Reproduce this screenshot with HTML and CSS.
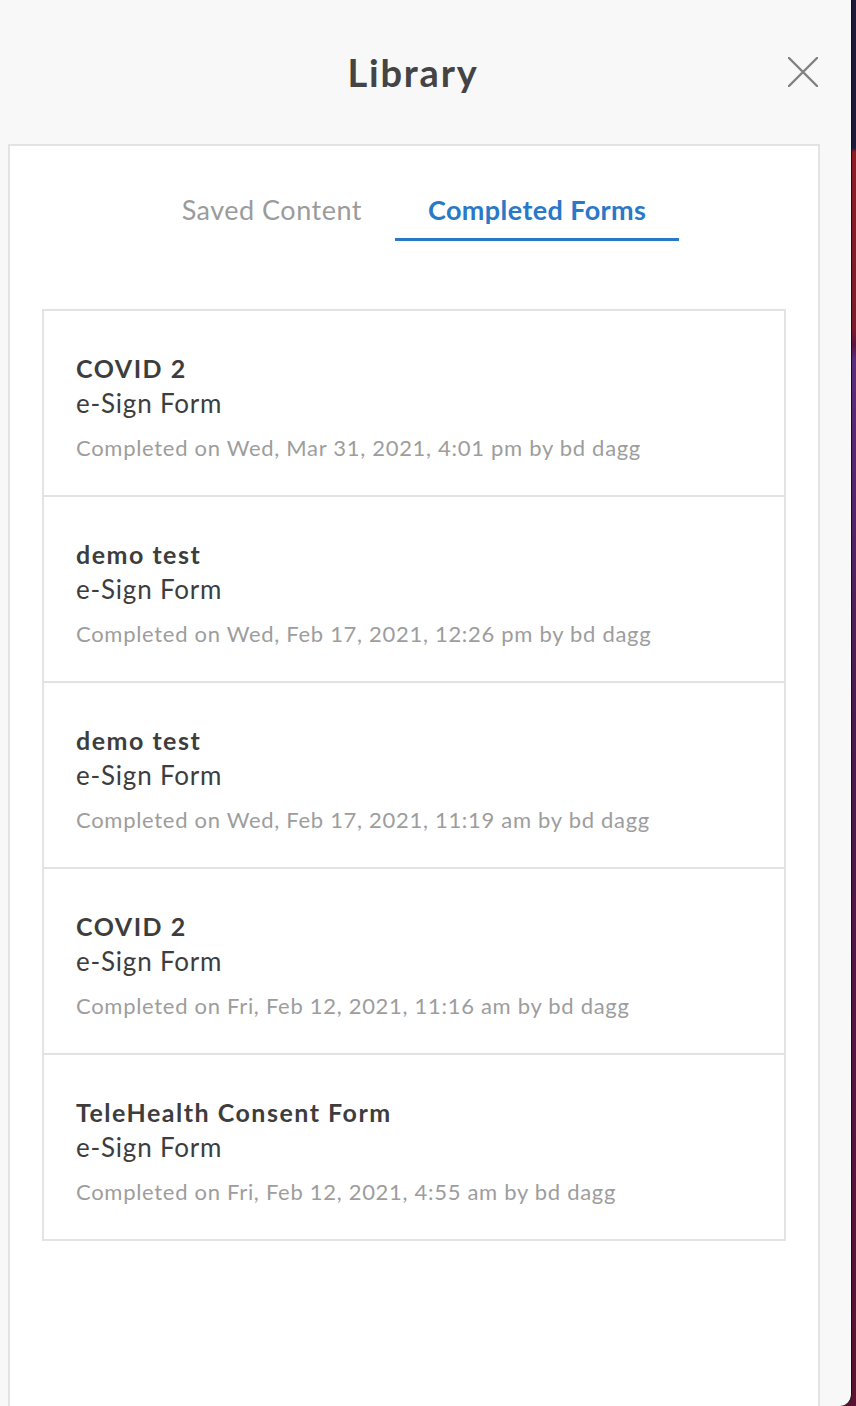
FILE: index.html
```html
<!DOCTYPE html>
<html lang="en">
<head>
    <meta charset="UTF-8">
    <meta name="viewport" content="width=device-width, initial-scale=1.0">
    <title>Library</title>
    <link rel="stylesheet" href="styles.css">
</head>
<body>

<div class="panel">
    <div class="header">
        <span></span>
        <h2>Library</h2>
        <button class="close" aria-label="Close">
            <svg width="30" height="30" viewBox="0 0 30 30">
                <path d="M1 1 L29 29 M29 1 L1 29" stroke="#808080" stroke-width="2.4" stroke-linecap="round" fill="none"/>
            </svg>
        </button>
    </div>

    <div class="content">
        <div class="tabs">
            <div class="tab">Saved Content</div>
            <div class="tab active">Completed Forms</div>
        </div>

        <div class="list">
            <div class="item">
                <div class="item-title">COVID 2</div>
                <div class="item-type">e-Sign Form</div>
                <div class="item-date">Completed on Wed, Mar 31, 2021, 4:01 pm by bd dagg</div>
            </div>
            <div class="item">
                <div class="item-title">demo test</div>
                <div class="item-type">e-Sign Form</div>
                <div class="item-date">Completed on Wed, Feb 17, 2021, 12:26 pm by bd dagg</div>
            </div>
            <div class="item">
                <div class="item-title">demo test</div>
                <div class="item-type">e-Sign Form</div>
                <div class="item-date">Completed on Wed, Feb 17, 2021, 11:19 am by bd dagg</div>
            </div>
            <div class="item">
                <div class="item-title">COVID 2</div>
                <div class="item-type">e-Sign Form</div>
                <div class="item-date">Completed on Fri, Feb 12, 2021, 11:16 am by bd dagg</div>
            </div>
            <div class="item">
                <div class="item-title">TeleHealth Consent Form</div>
                <div class="item-type">e-Sign Form</div>
                <div class="item-date">Completed on Fri, Feb 12, 2021, 4:55 am by bd dagg</div>
            </div>
        </div>
    </div>
</div>

</body>
</html>
```

FILE: styles.css
```css
body {
    margin: 0;
    height: 1406px;
    overflow: hidden;
    font-family: Lato, "Open Sans", sans-serif;
    background: linear-gradient(to bottom, #1c1a36 0, #1c1a36 148px, #8c1b26 152px, #7a1a2c 330px, #5a1440 345px, #5b2c7a 360px, #4a1a50 700px, #5a1232 1406px);
}
.panel {
    width: 852px;
    height: 1406px;
    box-sizing: border-box;
    background-color: #f8f8f8;
    border-right: 1px solid #111;
    border-bottom-right-radius: 12px;
    overflow: hidden;
}
.header {
    display: grid;
    grid-template-columns: 1fr auto 1fr;
    align-items: center;
    height: 144px;
    padding: 0 33px 0 8px;
}
.header h2 {
    margin: 0;
    font-size: 38px;
    font-weight: 700;
    letter-spacing: 1.8px;
    color: #444;
}
.close {
    justify-self: end;
    width: 30px;
    height: 30px;
    padding: 0;
    border: none;
    background: none;
    cursor: pointer;
    display: flex;
}
.content {
    margin-left: 8px;
    width: 812px;
    height: 1300px;
    box-sizing: border-box;
    border: 2px solid #e3e3e3;
    background-color: #fff;
    padding: 0 32px;
}
.tabs {
    display: flex;
    justify-content: center;
    margin-top: 47px;
}
.tab {
    padding: 0 33px 12px;
    font-size: 27px;
    letter-spacing: 0.5px;
    color: #9b9b9b;
    border-bottom: 3px solid transparent;
}
.tab.active {
    color: #2a78c8;
    font-weight: 700;
    letter-spacing: 0.4px;
    border-bottom-color: #2a78c8;
}
.list {
    margin-top: 68px;
    border: 2px solid #e3e3e3;
}
.item {
    height: 186px;
    box-sizing: border-box;
    padding: 40px 32px 0;
    border-bottom: 2px solid #e3e3e3;
}
.item:last-child {
    border-bottom: none;
    height: 184px;
}
.item-title {
    font-size: 25px;
    font-weight: 700;
    letter-spacing: 1.5px;
    color: #3d3d3d;
    line-height: 34px;
}
.item-type {
    font-size: 26px;
    letter-spacing: 0.8px;
    color: #3d3d3d;
    line-height: 36px;
}
.item-date {
    margin-top: 12px;
    font-size: 22px;
    letter-spacing: 0.7px;
    color: #9d9d9d;
    line-height: 30px;
}
```
